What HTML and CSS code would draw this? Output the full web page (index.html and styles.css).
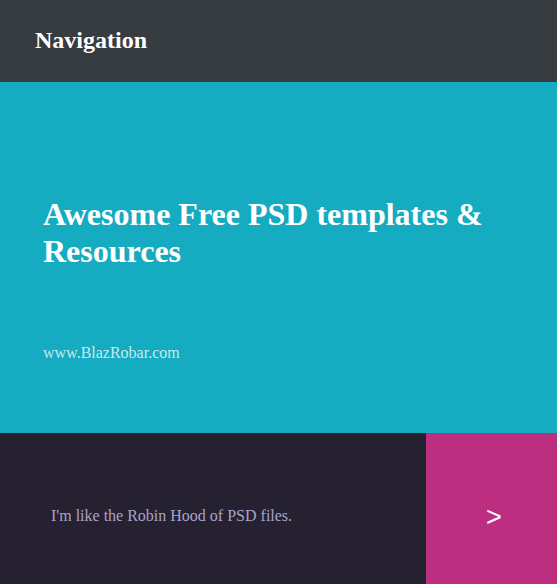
FILE: index.html
```html
<!DOCTYPE html>
<html>
<head>
<meta charset="utf-8">
<link rel="stylesheet" href="styles.css">
</head>
<body>
<header class="nav">
  <h2 class="nav-title">Navigation</h2>
</header>
<section class="hero">
  <h1 class="hero-title">Awesome Free PSD templates &amp; Resources</h1>
  <p class="hero-url">www.BlazRobar.com</p>
</section>
<footer class="foot">
  <p class="foot-text">I'm like the Robin Hood of PSD files.</p>
  <div class="foot-next">&gt;</div>
</footer>
</body>
</html>
```
FILE: styles.css
```css
html, body {
  margin: 0;
  padding: 0;
}
body {
  font-family: "Liberation Serif", "Times New Roman", serif;
  width: 557px;
  height: 584px;
  overflow: hidden;
}
.nav {
  height: 82px;
  background: #373c40;
  padding: 26px 0 0 35px;
  box-sizing: border-box;
}
.nav-title {
  margin: 0;
  color: #ffffff;
  font-size: 24px;
  font-weight: bold;
  line-height: 28px;
}
.hero {
  height: 351px;
  background: #15abc1;
  box-sizing: border-box;
  padding: 114px 40px 0 43px;
}
.hero-title {
  margin: 0;
  color: #ffffff;
  font-size: 32px;
  line-height: 37px;
  font-weight: bold;
}
.hero-url {
  margin: 74px 0 0;
  color: #c6e9ef;
  font-size: 16px;
  line-height: 18px;
}
.foot {
  height: 151px;
  background: #262130;
  display: flex;
}
.foot-text {
  flex: 1;
  margin: 0;
  padding: 74px 0 0 51px;
  color: #a9a3cc;
  font-size: 16px;
  line-height: 18px;
}
.foot-next {
  width: 131px;
  background: #bb2e80;
  color: #ffffff;
  font-family: "Liberation Sans", Arial, sans-serif;
  font-size: 27px;
  display: flex;
  justify-content: center;
  align-items: center;
  padding: 18px 0 0 5px;
  box-sizing: border-box;
}
```
